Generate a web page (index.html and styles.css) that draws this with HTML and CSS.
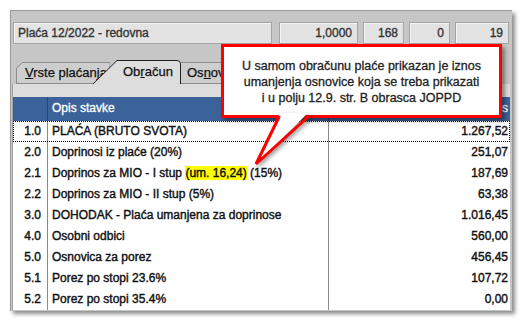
FILE: index.html
```html
<!DOCTYPE html>
<html lang="hr">
<head>
  <meta charset="UTF-8">
  <title>Obračun plaće</title>
  <link rel="stylesheet" href="styles.css">
</head>
<body>

  <div class="window">
    <div class="fields">
      <div class="field name">Plaća 12/2022 - redovna</div>
      <div class="field num w-koef">1,0000</div>
      <div class="field num w-sati">168</div>
      <div class="field num w-sati">0</div>
      <div class="field num w-dani">19</div>
    </div>

    <div class="tabs">
      <div class="tab tab-first"><u>V</u>rste plaćanja</div>
      <div class="tab tab-active">Ob<u>r</u>ačun</div>
      <div class="tab tab-next">Os<u>n</u>ovice</div>
    </div>

    <div class="panel">
      <div class="grid">
        <div class="row head">
          <div class="c1"></div>
          <div class="c2">Opis stavke</div>
          <div class="c3">Iznos</div>
        </div>
        <div class="row focus">
          <div class="c1">1.0</div>
          <div class="c2">PLAĆA (BRUTO SVOTA)</div>
          <div class="c3">1.267,52</div>
        </div>
        <div class="row">
          <div class="c1">2.0</div>
          <div class="c2">Doprinosi iz plaće (20%)</div>
          <div class="c3">251,07</div>
        </div>
        <div class="row">
          <div class="c1">2.1</div>
          <div class="c2">Doprinos za MIO - I stup <span class="mark">(um. 16,24)</span> (15%)</div>
          <div class="c3">187,69</div>
        </div>
        <div class="row">
          <div class="c1">2.2</div>
          <div class="c2">Doprinos za MIO - II stup (5%)</div>
          <div class="c3">63,38</div>
        </div>
        <div class="row">
          <div class="c1">3.0</div>
          <div class="c2">DOHODAK - Plaća umanjena za doprinose</div>
          <div class="c3">1.016,45</div>
        </div>
        <div class="row">
          <div class="c1">4.0</div>
          <div class="c2">Osobni odbici</div>
          <div class="c3">560,00</div>
        </div>
        <div class="row">
          <div class="c1">5.0</div>
          <div class="c2">Osnovica za porez</div>
          <div class="c3">456,45</div>
        </div>
        <div class="row">
          <div class="c1">5.1</div>
          <div class="c2">Porez po stopi 23.6%</div>
          <div class="c3">107,72</div>
        </div>
        <div class="row">
          <div class="c1">5.2</div>
          <div class="c2">Porez po stopi 35.4%</div>
          <div class="c3">0,00</div>
        </div>
      </div>
    </div>
  </div>

  <div class="callout">
    U samom obračunu plaće prikazan je iznos<br>
    umanjenja osnovice koja se treba prikazati<br>
    i u polju 12.9. str. B obrasca JOPPD
  </div>
  <svg class="tail" width="66" height="58" viewBox="0 0 66 58">
    <polygon points="30,1 58,1 6,52" fill="#fff"/>
    <polyline points="29.5,4 6,52 59,4" fill="none" stroke="#f00" stroke-width="3"/>
  </svg>

</body>
</html>
```

FILE: styles.css
```css
body {
  margin: 0;
  background: #fff;
  font-family: "Liberation Sans", Arial, sans-serif;
  font-size: 12px;
  color: #111;
  position: relative;
  width: 522px;
  height: 325px;
  overflow: hidden;
}

.window {
  margin: 10px 0 0 10px;
  width: 498px;
  padding: 11px 2px 1px 1px;
  background: #c6c6c6;
  border-top: 1px solid #9a9a9a;
  border-left: 1px solid #9a9a9a;
  box-shadow: 3px 3px 4px rgba(0, 0, 0, 0.45);
}

.fields {
  display: flex;
  gap: 5px;
  margin-left: 1px;
}

.field {
  box-sizing: border-box;
  height: 22px;
  line-height: 20px;
  background: #e3e3e3;
  border: 1px solid #a4a4a4;
  box-shadow: inset 1px 1px 0 #f6f6f6;
  color: #333;
  -webkit-text-stroke: 0.35px #333;
}

.name {
  width: 259px;
  margin-right: 2px;
  padding-left: 4px;
}

.num {
  text-align: right;
  padding-right: 5px;
}

.w-koef { width: 79px; }
.w-sati { width: 41px; }
.w-dani { width: 54px; }

.tabs {
  display: flex;
  align-items: flex-end;
  height: 24px;
  margin-top: 16px;
  padding-left: 4px;
  font-size: 13px;
}

.tab {
  box-sizing: border-box;
  height: 22px;
  line-height: 22px;
  color: #111;
  background-repeat: no-repeat;
  -webkit-text-stroke: 0.25px #111;
}

.tab-first {
  width: 94px;
  padding-left: 9px;
  background-image: url("data:image/svg+xml;utf8,<svg xmlns='http://www.w3.org/2000/svg' width='94' height='22'><path d='M0.5,22 V6 L6.5,0.5 H94 V21.5 H0' fill='%23cecece' stroke='%238c8c8c'/></svg>");
}

.tab-active {
  width: 88px;
  height: 24px;
  line-height: 24px;
  margin-left: -17px;
  padding-left: 30px;
  background-image: url("data:image/svg+xml;utf8,<svg xmlns='http://www.w3.org/2000/svg' width='88' height='24'><path d='M0,24 L24,0.5 H84 Q87.5,0.5 87.5,4 V24' fill='%23dddddd' stroke='%23202020'/></svg>");
}

.tab-next {
  width: 80px;
  padding-left: 6px;
  background-image: url("data:image/svg+xml;utf8,<svg xmlns='http://www.w3.org/2000/svg' width='80' height='22'><path d='M0,0.5 H80 M0,21.5 H80' fill='none' stroke='%238c8c8c'/><rect x='0' y='1' width='80' height='20' fill='%23cecece'/></svg>");
}

.panel {
  padding-top: 13px;
  background: #dddddd;
  border-left: 1px solid #a0a0a0;
}

.grid {
  background: #fff;
}

.row {
  display: grid;
  grid-template-columns: 35px 281px 1fr;
  height: 21px;
  line-height: 21px;
  -webkit-text-stroke: 0.4px #111;
}

.row > div {
  white-space: nowrap;
  overflow: hidden;
}

.c1 {
  text-align: right;
  padding-right: 6px;
  border-right: 1px solid #8a8a8a;
}

.c2 {
  padding-left: 4px;
  border-right: 1px solid #8a8a8a;
}

.c3 {
  text-align: right;
  padding-right: 2px;
}

.head {
  height: 24px;
  line-height: 22px;
  background: #3b6399;
  color: #fff;
  -webkit-text-stroke: 0.3px #fff;
}

.head .c1,
.head .c2 {
  border-right-color: #2b4a73;
}

.focus {
  outline: 1px dotted #000;
  outline-offset: -1px;
}

.mark {
  background: #ffff00;
}

.callout {
  position: absolute;
  left: 221px;
  top: 44px;
  box-sizing: border-box;
  width: 281px;
  height: 74px;
  padding-top: 11px;
  border: 3px solid #f00;
  background: #fff;
  box-shadow: 3px 3px 4px rgba(0, 0, 0, 0.4);
  text-align: center;
  font-size: 12.5px;
  line-height: 16px;
  color: #222;
  -webkit-text-stroke: 0.3px #222;
}

.tail {
  position: absolute;
  left: 250px;
  top: 112px;
  filter: drop-shadow(2px 2px 2px rgba(0, 0, 0, 0.4));
}
```
